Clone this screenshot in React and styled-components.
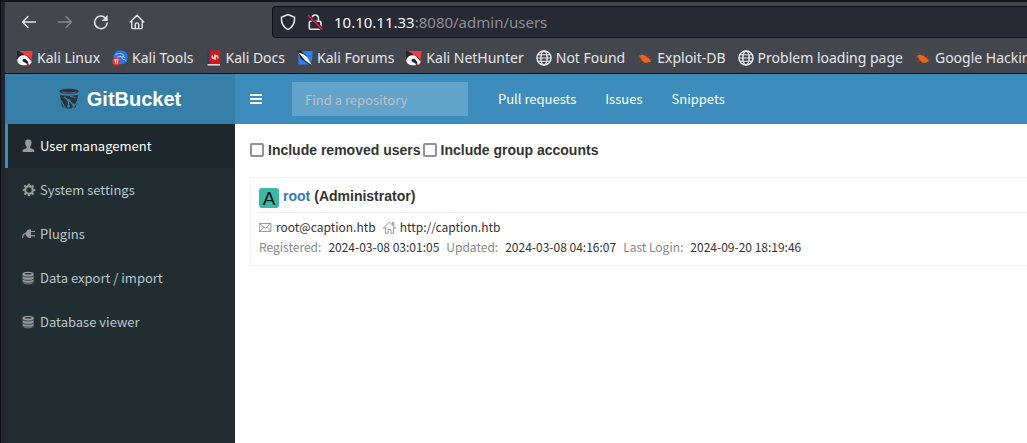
import React from "react";
import styled, { createGlobalStyle } from "styled-components";

const uiFont = `"Noto Sans", sans-serif`;
const bodyFont = `"Noto Sans CJK SC", "Noto Sans", sans-serif`;
const headFont = `"Liberation Sans", Arial, sans-serif`;

const GlobalStyle = createGlobalStyle`
  *, *::before, *::after { box-sizing: border-box; }
  html, body, #root { height: 100%; }
  body { margin: 0; overflow: hidden; background: #23252e; }
  a { text-decoration: none; color: inherit; }
  button { font: inherit; color: inherit; background: none; border: 0; padding: 0; }
`;

const Window = styled.div`
  display: flex;
  flex-direction: column;
  min-height: 100%;
  border-left: 1px solid #0d0e14;
  padding: 2px 0 0 4px;
  background: linear-gradient(#15161c 2px, #23252e 2px);
`;

const Chrome = styled.header`
  background: #44464d;
  border-bottom: 1px solid #0c0c10;
  font-family: ${uiFont};
  color: #e6e6e9;
  white-space: nowrap;
  overflow: hidden;
`;

const NavRow = styled.div`
  display: flex;
  align-items: center;
  height: 40px;
`;

const NavButtons = styled.div`
  display: flex;
  gap: 20px;
  width: 267px;
  padding-left: 16px;
`;

const IconButton = styled.button`
  display: flex;
  opacity: ${(p) => (p.disabled ? 0.4 : 1)};
  svg { width: 16px; height: 16px; }
`;

const UrlBar = styled.div`
  flex: 1;
  display: flex;
  align-items: center;
  gap: 11px;
  height: 32px;
  padding-left: 7px;
  background: #272933;
  border: 1px solid #0f1015;
  border-right: 0;
  border-radius: 4px 0 0 4px;
  font-size: 15px;
  line-height: 20px;
  svg { width: 16px; height: 18px; flex: none; }
`;

const Url = styled.span`
  color: #8f9097;
  b { font-weight: 400; color: #fbfbfe; }
`;

const Bookmarks = styled.nav`
  display: flex;
  gap: 12px;
  height: 31px;
  padding-left: 12px;
`;

const Bookmark = styled.a`
  display: flex;
  align-items: center;
  gap: 4px;
  font-size: 14px;
  line-height: 31px;
  svg { width: 16px; height: 16px; flex: none; }
`;

const Page = styled.div`
  flex: 1;
  display: grid;
  grid-template-columns: 230px 1fr;
  grid-template-rows: 50px 1fr;
  background: #fff;
  font-family: ${bodyFont};
  font-size: 13px;
  line-height: 20px;
  color: #333;
`;

const Brand = styled.a`
  display: flex;
  align-items: center;
  justify-content: center;
  gap: 8px;
  background: #367fa9;
  color: #fff;
  font: 700 20px/50px ${headFont};
  svg { width: 20px; height: 22px; }
`;

const TopBar = styled.div`
  display: flex;
  align-items: center;
  background: #3c8dbc;
  color: #fff;
`;

const Toggle = styled.button`
  padding: 0 15px;
  display: flex;
  svg { width: 12px; height: 10px; }
`;

const Search = styled.input`
  width: 176px;
  height: 34px;
  margin: 0 15px;
  padding: 6px 13px;
  border: 0;
  border-radius: 0;
  background: rgba(255, 255, 255, 0.2);
  color: #fff;
  font: 13px/20px ${bodyFont};
  &::placeholder { color: #bbc4ca; opacity: 1; }
`;

const TopLink = styled.a`
  padding: 0 14px 0 15px;
`;

const Sidebar = styled.nav`
  background: #222d32;
  color: #b8c7ce;
`;

const SideItem = styled.a`
  display: flex;
  align-items: center;
  gap: 4px;
  height: 44px;
  padding-left: 14px;
  border-left: 3px solid ${(p) => (p.$active ? "#3c8dbc" : "transparent")};
  background: ${(p) => (p.$active ? "#1e282c" : "none")};
  color: ${(p) => (p.$active ? "#fff" : "inherit")};
  svg { width: 14px; height: 14px; color: #999; }
`;

const Content = styled.main`
  padding: 15px 0 15px 15px;
  overflow: hidden;
`;

const Filters = styled.div`
  display: flex;
  gap: 2px;
  height: 22px;
  align-items: center;
`;

const Filter = styled.label`
  display: flex;
  align-items: center;
  gap: 4px;
  font: 700 14px/20px ${headFont};
`;

const Check = styled.input`
  appearance: none;
  width: 14px;
  height: 14px;
  margin: 0;
  border: 2px solid #8f8f9d;
  border-radius: 2px;
  background: #fff;
`;

const Card = styled.section`
  margin-top: 16px;
  padding: 8px 0 8px 8px;
  border: 1px solid #f4f4f4;
  border-right: 0;
`;

const CardHead = styled.div`
  display: flex;
  gap: 4px;
  height: 27px;
  padding-top: 2px;
  border-bottom: 1px solid #eee;
  font: 700 14px/17px ${headFont};
  a { color: #337ab7; }
`;

const Avatar = styled.span`
  width: 20px;
  height: 20px;
  border-radius: 3px;
  background: #3cb8a5;
  color: #111;
  font: 400 19px/21px ${headFont};
  text-align: center;
`;

const Line = styled.div`
  display: flex;
  align-items: center;
  gap: 7px;
  height: 20px;
  font-size: 12px;
  white-space: nowrap;
  svg { width: 13px; height: 13px; color: #999; }
`;

const Contact = styled.span`
  display: flex;
  align-items: center;
  gap: 4px;
`;

const Lines = styled.div`
  padding-top: 4px;
`;

const Muted = styled.span`
  color: #888;
`;

const Stroke = ({ w = 1.4, children, box = "0 0 16 16" }) => (
  <svg viewBox={box} fill="none" stroke="currentColor" strokeWidth={w} strokeLinecap="round" strokeLinejoin="round" aria-hidden="true">
    {children}
  </svg>
);

const Back = () => <Stroke><path d="M14.5 8H1.8M7 2.6 1.6 8 7 13.4" /></Stroke>;
const Forward = () => <Stroke><path d="M1.5 8h12.7M9 2.6 14.4 8 9 13.4" /></Stroke>;
const Reload = () => <Stroke w={1.5}><path d="M13.8 6A6.3 6.3 0 1 0 14.2 9" /><path d="M14.2 2v4.5H9.7Z" fill="currentColor" strokeWidth="0.8" /></Stroke>;
const Home = () => <Stroke><path d="M1.2 8 8 1.2 14.8 8M2.8 7v6.6q0 1 1 1h8.4q1 0 1-1V7M6.3 14.4V10.6a1.7 1.7 0 0 1 3.4 0v3.8" /></Stroke>;
const Shield = () => <Stroke w={1.5} box="0 0 16 18"><path d="M8 1.5 14.6 4.2C14.9 9.6 12.8 14.2 8 16.6 3.2 14.2 1.1 9.6 1.4 4.2Z" /></Stroke>;
const Lock = () => (
  <Stroke w={1.6} box="0 0 16 18">
    <path d="M5 8V5.2a3.2 3.2 0 0 1 6.4 0V8M3.5 8.2h9.2q1.2 0 1.2 1.2v5.6q0 1.2-1.2 1.2H3.5q-1.2 0-1.2-1.2V9.4q0-1.2 1.2-1.2Z" />
    <path d="M1.4 2.6 14.8 16" stroke="#272933" strokeWidth="3.4" />
    <path d="M1.4 2.6 14.8 16" stroke="#e2214b" />
  </Stroke>
);
const Globe = () => <Stroke w={1.5}><circle cx="8" cy="8" r="7" /><ellipse cx="8" cy="8" rx="3.2" ry="7" /><path d="M1 8h14M2 4.8h12M2 11.2h12" strokeWidth="1.1" /></Stroke>;

const KaliRed = () => (
  <svg viewBox="0 0 16 16" aria-hidden="true">
    <path d="M3 1h12.6L14 14.5H4Z" fill="#f33b3e" />
    <path d="M0 .5 7.5 4 3 8 1 10 0 9Z" fill="#25262c" />
    <path d="M13.5 9.5C11 4.5 6 4 3.5 7c-2.8 3.4.3 7.6 4.3 7.2 3.6-.3 5.4-2.4 6-4.7" fill="#1d1d22" />
    <path d="M.4 9.5C2.200 5 7 4 10.400 6.400l4.400 5.600-2.900 3C11.500 11.500 8.800 8 6.400 9c-1.800.8-.8 3.400 2.600 3.800l1 2.200C4 16.400-.4 13.500.4 9.500Z" fill="#fff" />
  </svg>
);
const KaliTools = () => (
  <svg viewBox="0 0 16 16" aria-hidden="true">
    <circle cx="8.6" cy="7.2" r="7" fill="#2878ed" />
    <path d="M3.5 4.5c4-1.8 7.6-.8 8.7 1.5M5 7.2c3.5-1.4 5.8-.6 8 .4M12 6.2c-3 .4-2.6 3.2.2 3.4 1.3.1 1.9 1 2 2" fill="none" stroke="#b9d8ff" strokeWidth="0.8" />
    <circle cx="4.4" cy="11.6" r="4" fill="#ee3338" />
    <path d="M2.2 9.8h4.4M3.6 10v3.6M5.5 10v3.6" stroke="#fff" fill="none" />
  </svg>
);
const KaliDocs = () => (
  <svg viewBox="0 0 16 16" aria-hidden="true">
    <path d="M1.500 .5h2.500v14H1.500Z" fill="#343a72" />
    <path d="M3.500 .5h10.500v13.500H3.500Z" fill="#d9141b" />
    <path d="M1.500 14h12.500v1.600H1.500Z" fill="#d8d5d5" />
    <path d="M6.500 5.500c-1 2.500.8 3.600 1.800 2.200l1.400-1.600c1.200-1.200 2.800.2 1.800 2.400M9 4.500v5.500" fill="none" stroke="#fff" strokeWidth="1.200" />
  </svg>
);
const KaliForums = () => (
  <svg viewBox="0 0 16 16" aria-hidden="true">
    <path d="M1.4 1h14.4L14.6 14.6H1.4Z" fill="#287ff4" />
    <path d="M0 .4 4.5 1 15.4 13.6 14 15.500 4 9Z" fill="#20242c" />
    <path d="M1.500 2.600 7 4.400l3.600 3.300 4.300 7.300-6.800-4.600L4.500 6.200Z" fill="#fff" />
  </svg>
);
const Exploit = () => (
  <svg viewBox="0 0 16 16" aria-hidden="true">
    <path d="M2 5.800 5 4.600l4 1.400L12.600 9l1.400 2.600-3 .8-3 .6L5 10.600Z" fill="#ec641c" />
    <path d="M5 4.600 3.600 3M8 5.400l1-2M11 7.400l2.600-1.400M12.600 9.600l2.800-.4M4 7.400.8 7M4.800 10.200l-3 1.200M7 12.400l-1.400 1.600" stroke="#a54c20" strokeWidth="0.800" fill="none" />
  </svg>
);

const Bucket = () => (
  <svg viewBox="0 0 22 24" aria-hidden="true">
    <ellipse cx="11" cy="3.6" rx="10.600" ry="2.8" fill="#2d3236" />
    <path d="M3 4.2c4 1.5 12 1.5 16 0" fill="none" stroke="#626c72" strokeWidth="1" />
    <path d="M1 7.200c5 1.600 15 1.600 20 0l-2.300 13c-2.500 3-12.900 3-15.400 0Z" fill="#2d3236" />
    <path d="m5.2 9.800 5.400 3.700 5.600 5.300M10.5 13.500v6.700" fill="none" stroke="#367fa9" strokeWidth="1.500" />
    <path d="M1.400 13.500c2.600 1 3 6 5.600 8.500M20.600 14.500c-2 .5-2 5-6 7.500M12 9l6 1.500" fill="none" stroke="#367fa9" strokeWidth="1.300" />
    <circle cx="10.5" cy="13.4" r="1.800" fill="#367fa9" /><circle cx="10.5" cy="20" r="1.600" fill="#367fa9" /><circle cx="16" cy="18.500" r="1.600" fill="#367fa9" />
  </svg>
);
const Bars = () => <svg viewBox="0 0 12 10" fill="currentColor" aria-hidden="true"><path d="M0 0h12v2H0ZM0 4h12v2H0ZM0 8h12v2H0Z" /></svg>;

const Person = () => <svg viewBox="0 0 14 14" fill="currentColor" aria-hidden="true"><path d="M5.900 .6h.8c2.200 0 2.900 1.600 2.800 3.500-.1 1.700-.7 3-1.300 3.700v1.300l2.900 1.200c1 .4 1.200 1 1.200 2.700H.6c0-1.700.2-2.300 1.200-2.700l2.800-1.200V7.800C4 7.100 3.200 5.800 3.100 4.100 3 2.200 3.700.6 5.900.6Z" /></svg>;
const Gear = () => (
  <svg viewBox="0 0 14 14" aria-hidden="true" fill="none" stroke="currentColor">
    <circle cx="7" cy="7" r="3.8" strokeWidth="2.2" />
    <path d="M7 .7v2M7 11.300v2M.7 7h2M11.300 7h2M2.500 2.500l1.500 1.500M10 10l1.500 1.500M2.500 11.500 4 10M10 4l1.500-1.500" strokeWidth="2.200" />
  </svg>
);
const Plug = () => (
  <svg viewBox="0 0 14 14" aria-hidden="true">
    <path d="M3 6.800 5.200 3.200Q7 2 9 2.500v8.500Q7 11.400 5.200 10Z" fill="currentColor" />
    <path d="M9 4.500h4M9 8.800h4M4.500 6.500C1.500 6.500.7 8 .7 11" fill="none" stroke="currentColor" strokeWidth="1.200" />
  </svg>
);
const Db = () => (
  <svg viewBox="0 0 14 14" aria-hidden="true">
    <path d="M.6 2.600v8.900c1.200 2.400 9.800 2.400 11 0V2.600Z" fill="currentColor" />
    <ellipse cx="6.100" cy="2.800" rx="5.500" ry="2.100" fill="currentColor" />
    <ellipse cx="6.100" cy="2.700" rx="3.600" ry="0.700" fill="#222d32" />
    <path d="M.4 4.800c2 1.700 9.400 1.700 11.400 0M.4 8.100c2 1.700 9.400 1.700 11.400 0M.4 11c2 1.500 9.400 1.500 11.400 0" fill="none" stroke="#222d32" strokeWidth="0.800" />
  </svg>
);
const Mail = () => <Stroke w={1} box="0 0 13 13"><path d="M.6 2.500h11.300v8H.6ZM1 3l5.200 4.200L11.500 3M1 10l3.600-3.600M11.500 10 7.900 6.400" /></Stroke>;
const House = () => <Stroke w={1} box="0 0 13 13"><path d="M.6 7 6.500.9 12.400 7M2.400 7v5.200h2.700V8.400h2.800v3.800h2.700V7M9.500 3.500V1.300h1.300v3.500M.6 7h1.800M10.600 7h1.800" /></Stroke>;

const bookmarks = [
  [KaliRed, "Kali Linux"],
  [KaliTools, "Kali Tools"],
  [KaliDocs, "Kali Docs"],
  [KaliForums, "Kali Forums"],
  [KaliRed, "Kali NetHunter"],
  [Globe, "Not Found"],
  [Exploit, "Exploit-DB"],
  [Globe, "Problem loading page"],
  [Exploit, "Google Hacking DB"],
];

const sideItems = [
  [Person, "User management"],
  [Gear, "System settings"],
  [Plug, "Plugins"],
  [Db, "Data export / import"],
  [Db, "Database viewer"],
];

export default function App() {
  return (
    <Window>
      <GlobalStyle />
      <Chrome>
        <NavRow>
          <NavButtons>
            <IconButton aria-label="Back"><Back /></IconButton>
            <IconButton aria-label="Forward" disabled><Forward /></IconButton>
            <IconButton aria-label="Reload"><Reload /></IconButton>
            <IconButton aria-label="Home"><Home /></IconButton>
          </NavButtons>
          <UrlBar>
            <Shield />
            <Lock />
            <Url><b>10.10.11.33</b>:8080/admin/users</Url>
          </UrlBar>
        </NavRow>
        <Bookmarks>
          {bookmarks.map(([Icon, name]) => (
            <Bookmark href="#" key={name}><Icon />{name}</Bookmark>
          ))}
        </Bookmarks>
      </Chrome>
      <Page>
        <Brand href="#"><Bucket />GitBucket</Brand>
        <TopBar>
          <Toggle aria-label="Toggle navigation"><Bars /></Toggle>
          <Search type="text" placeholder="Find a repository" aria-label="Find a repository" />
          <TopLink href="#">Pull requests</TopLink>
          <TopLink href="#">Issues</TopLink>
          <TopLink href="#">Snippets</TopLink>
        </TopBar>
        <Sidebar>
          {sideItems.map(([Icon, name], i) => (
            <SideItem href="#" key={name} $active={i === 0}><Icon />{name}</SideItem>
          ))}
        </Sidebar>
        <Content>
          <Filters>
            <Filter><Check type="checkbox" />Include removed users</Filter>
            <Filter><Check type="checkbox" />Include group accounts</Filter>
          </Filters>
          <Card>
            <CardHead>
              <Avatar>A</Avatar>
              <a href="#">root</a>
              <span>(Administrator)</span>
            </CardHead>
            <Lines>
              <Line>
                <Contact><Mail />root@caption.htb</Contact>
                <Contact><House />http://caption.htb</Contact>
              </Line>
              <Line>
                <Muted>Registered:</Muted>2024-03-08 03:01:05
                <Muted>Updated:</Muted>2024-03-08 04:16:07
                <Muted>Last Login:</Muted>2024-09-20 18:19:46
              </Line>
            </Lines>
          </Card>
        </Content>
      </Page>
    </Window>
  );
}
